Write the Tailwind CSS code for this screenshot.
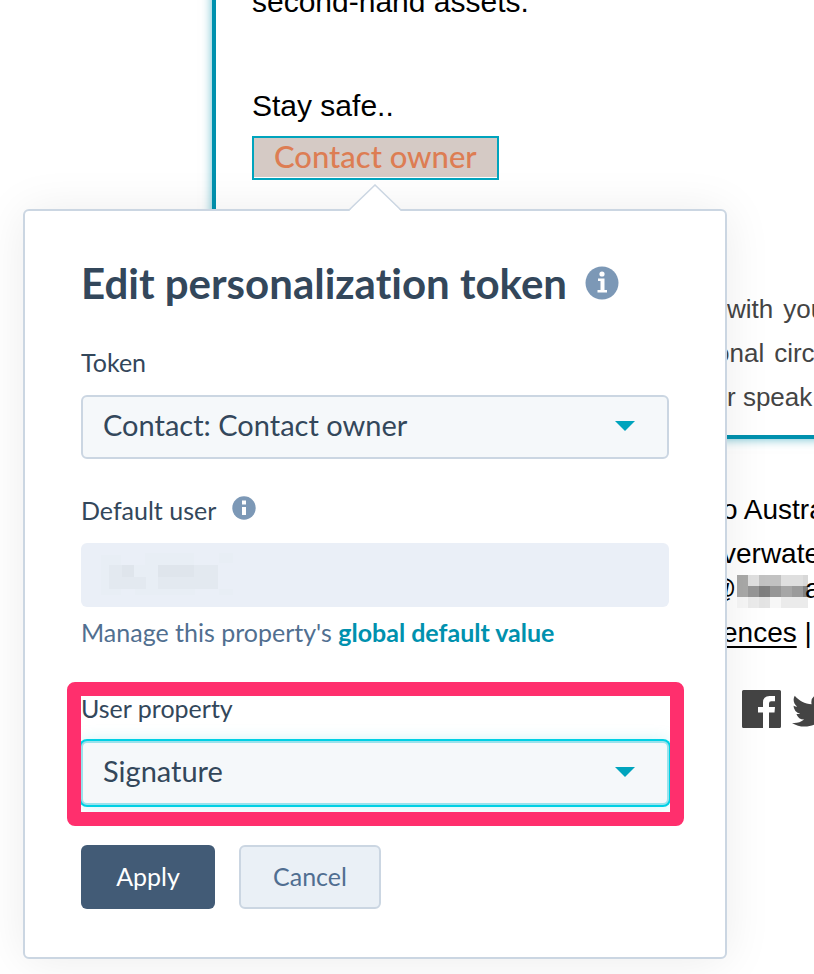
<!DOCTYPE html>
<html lang="en">
<head>
<meta charset="utf-8">
<meta name="viewport" content="width=device-width, initial-scale=1">
<title>Edit personalization token</title>
<script src="https://cdn.jsdelivr.net/npm/@tailwindcss/browser@4"></script>
</head>
<body class="bg-white font-[Lato,sans-serif] text-[#33475b] [font-variant-ligatures:none]">
<div class="relative min-h-screen overflow-hidden">

  <!-- Email being edited -->
  <main class="pl-[212px] font-['Liberation_Sans',Arial,sans-serif] whitespace-nowrap">
    <section class="-mr-10 border-b-4 border-l-4 border-[#0091ae] pb-4 pl-9 text-[30px] leading-10 text-black shadow-[0_0_10px_rgba(0,145,174,0.6)]">
      <p class="-mt-[18px] pb-16">second-hand assets.</p>
      <p class="pb-[10px]">Stay safe..</p>
      <div class="inline-flex h-11 items-center border-2 border-[#00a4bd] bg-[#d5cac5] px-5 pb-1 font-[Lato,sans-serif] text-[31px] font-medium text-[#dd7d53] shadow-[inset_0_-1px_0_#fff]">Contact owner</div>
      <div class="mt-[107px] pl-[463px] text-[26px] leading-[44px] text-[#444444]">
        <p class="flex gap-x-[10px] pl-3"><span>with</span><span>your</span></p>
        <p class="flex gap-x-[10px]"><span>onal</span><span>circle</span></p>
        <p class="pl-3">r speak</p>
      </div>
    </section>
    <footer class="pt-[49px] pl-[510px] text-[28px] leading-[44px] text-black">
      <p>o Australia</p>
      <p class="leading-[43px]">verwater</p>
      <p class="-ml-[14px] flex items-start leading-7"><span>@h</span>
        <svg class="-ml-[15px] h-[33px] w-[71px] shrink-0" viewBox="0 0 71 33" shape-rendering="crispEdges" aria-hidden="true">
          <path fill="#a9a9a8" d="M0 0h11v11H0z"/><path fill="#dfdfdf" d="M11 0h11v11H11zM44 0h22v11H44z"/><path fill="#c2c2c2" d="M22 0h22v11H22z"/><path fill="#d8d8d8" d="M66 0h5v11h-5z"/>
          <path fill="#a9a9a8" d="M0 11h11v11H0z"/><path fill="#969696" d="M11 11h11v11H11zM33 11h11v11H33z"/><path fill="#7f7f7f" d="M22 11h11v11H22z"/><path fill="#a6a6a6" d="M44 11h11v11H44z"/><path fill="#9b9b9b" d="M55 11h11v11H55z"/><path fill="#818181" d="M66 11h5v11h-5z"/>
          <path fill="#f7f7f7" d="M0 22h11v11H0zM33 22h11v11H33z"/><path fill="#ebebeb" d="M11 22h11v11H11zM44 22h27v11H44z"/><path fill="#e4e4e4" d="M22 22h11v11H22z"/>
        </svg><span class="-ml-[3px]">a</span></p>
      <p class="leading-[50px]"><a href="#" class="underline decoration-2 underline-offset-4">ences</a> |</p>
      <div class="flex gap-[11px] pt-8 pl-5">
        <a href="#" aria-label="Facebook"><svg class="h-[38px] w-[39px]" viewBox="0 0 39 38" aria-hidden="true"><path fill="#444" fill-rule="evenodd" d="M1.500 0h36Q39 0 39 1.500v35Q39 38 37.500 38H27V22.500h5.500l.5-5.500h-6V13.500q0-2.300 2.300-2.300H33V6h-5.500Q21 6 21 12.500V17h-5v5.500h5V38H1.500Q0 38 0 36.500v-35Q0 0 1.500 0z"/></svg></a>
        <a href="#" aria-label="Twitter"><svg class="mt-[3px] h-[34px] w-[40px]" viewBox="0 1.500 24 20.500" preserveAspectRatio="none" aria-hidden="true"><path fill="#444" d="M23.950 4.570a10 10 0 0 1-2.820.770 4.960 4.960 0 0 0 2.160-2.720c-.950.550-2 .960-3.130 1.180a4.920 4.920 0 0 0-8.380 4.480C7.690 8.090 4.070 6.130 1.640 3.160a4.820 4.820 0 0 0-.670 2.480c0 1.710.870 3.210 2.190 4.100a4.900 4.900 0 0 1-2.230-.620v.060a4.920 4.920 0 0 0 3.950 4.830 5 5 0 0 1-2.210.080 4.940 4.940 0 0 0 4.600 3.420A9.870 9.870 0 0 1 0 19.540a13.990 13.990 0 0 0 7.550 2.210c9.050 0 14-7.500 14-13.980 0-.210 0-.420-.020-.630a9.940 9.940 0 0 0 2.460-2.550z"/></svg></a>
      </div>
    </footer>
  </main>

  <!-- Token popover -->
  <form class="absolute top-[209px] left-[23px] w-[704px] rounded-md border-2 border-[#cbd6e2] bg-white px-14 pt-12 pb-12 shadow-[0_2px_48px_rgba(0,0,0,0.08)]" role="dialog" aria-labelledby="popover-title">
    <svg class="absolute -top-[27px] left-1/2 h-[29px] w-[54px] -translate-x-1/2" viewBox="0 0 54 29" aria-hidden="true"><path fill="#fff" d="M1 29v-2L27 1l26 26v2z"/><path fill="none" stroke="#cbd6e2" stroke-width="1.500" d="M.5 26.500 27 1l26.500 25.500"/></svg>

    <div class="flex h-12 items-center gap-[18px]">
      <h1 id="popover-title" class="text-[42px] leading-[48px] font-bold">Edit personalization token</h1>
      <svg class="size-[34px]" viewBox="0 0 34 34" aria-hidden="true"><circle cx="17" cy="17" r="16.500" fill="#7c98b6"/><circle cx="17" cy="8" r="2.600" fill="#fff"/><path fill="#fff" d="M13 12.500h6.500v11.500H22v2.500h-9.500V24H15.500v-9H13z"/></svg>
    </div>

    <div class="mt-[39px]">
      <label for="token" class="block text-[25px] leading-8">Token</label>
      <div class="relative mt-[17px]">
        <select id="token" class="h-16 w-full appearance-none rounded-md border-2 border-[#cbd6e2] bg-[#f5f8fa] px-5 pb-1 text-[29px] outline-none"><option>Contact: Contact owner</option></select>
        <svg class="pointer-events-none absolute top-[26px] right-[34px] h-[10px] w-5" viewBox="0 0 20 10" aria-hidden="true"><path fill="#00a4bd" d="M0 0h20L10 10z"/></svg>
      </div>
    </div>

    <div class="mt-[35px]">
      <div class="flex items-start gap-4">
        <label for="default-user" class="text-[25px] leading-8">Default user</label>
        <svg class="mt-[2px] size-6" viewBox="0 0 24 24" aria-hidden="true"><circle cx="12" cy="12" r="11.700" fill="#7c98b6"/><path fill="#fff" d="M10 4.500h4v4h-4zM10 11h4v8h-4z"/></svg>
      </div>
      <div class="relative mt-[17px]">
        <input id="default-user" type="text" disabled class="block h-16 w-full rounded-md bg-[#eaeff7] px-5">
        <svg class="pointer-events-none absolute top-[10px] left-5 h-[42px] w-[132px]" viewBox="0 0 132 42" shape-rendering="crispEdges" aria-hidden="true">
          <path fill="#e8eef5" d="M0 2h20v40H0zM20 12h97v24H20zM44 0h49v12H44zM118 0h14v10h-14zM118 36h14v6h-14zM34 36h60v6H34z"/>
          <path fill="#e3e9f0" d="M8 12h25v24H8zM33 24h12v12H33zM57 12h36v24H57zM93 12h24v24H93z"/>
          <path fill="#dfe5ec" d="M21 12h12v12H21zM57 12h36v12H57z"/>
        </svg>
      </div>
      <p class="mt-[9px] text-[25px] leading-8 text-[#516f90]">Manage this property's <a href="#" class="font-bold text-[#0091ae]">global default value</a></p>
    </div>

    <div class="relative mt-11">
      <label for="user-property" class="block text-[25px] leading-8">User property</label>
      <div class="relative mt-[17px]">
        <select id="user-property" class="block h-16 w-full appearance-none rounded-md border-2 border-[#99e2ec] bg-[#f5f8fa] px-5 pb-1 text-[29px] shadow-[0_0_0_2px_#00d0e4,0_0_16px_rgba(0,208,228,0.25)] outline-none"><option>Signature</option></select>
        <svg class="pointer-events-none absolute top-[26px] right-[34px] h-[10px] w-5" viewBox="0 0 20 10" aria-hidden="true"><path fill="#00a4bd" d="M0 0h20L10 10z"/></svg>
      </div>
      <div class="pointer-events-none absolute -top-[10px] -right-[15px] -bottom-[21px] -left-[14px] rounded-lg border-[14px] border-[#ff2f6d]"></div>
    </div>

    <div class="mt-10 flex gap-6">
      <button type="submit" class="h-16 w-[134px] rounded-md bg-[#425b76] text-[25px] text-white">Apply</button>
      <button type="button" class="h-16 w-[142px] rounded-md border-2 border-[#cbd6e2] bg-[#eaf0f6] text-[25px] text-[#506e91]">Cancel</button>
    </div>
  </form>
</div>
</body>
</html>
